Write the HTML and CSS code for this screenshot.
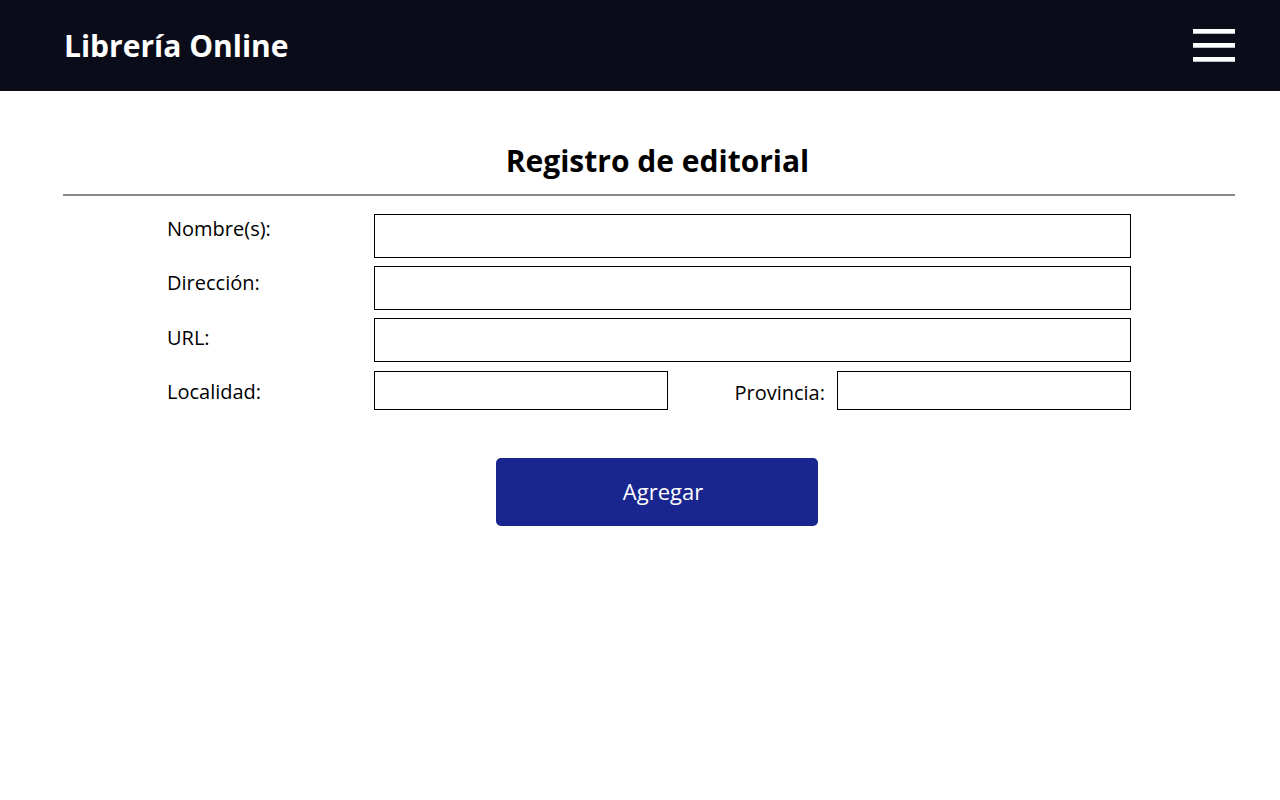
FILE: index.html
```html
<!DOCTYPE html>
<html lang="es">
<head>
<meta charset="utf-8">
<title>Librería Online</title>
<link rel="stylesheet" href="styles.css">
</head>
<body>
<header class="topbar">
  <div class="brand">Librería Online</div>
  <button class="menu" aria-label="Menú">
    <span class="bar"></span><span class="bar"></span><span class="bar"></span>
  </button>
</header>
<main class="content">
  <h1 class="title">Registro de editorial</h1>
  <hr class="rule">
  <form class="form">
    <div class="labels">
      <label class="lbl">Nombre(s):</label>
      <label class="lbl">Dirección:</label>
      <label class="lbl">URL:</label>
      <label class="lbl last">Localidad:</label>
    </div>
    <div class="fields">
      <input class="inp" type="text">
      <input class="inp" type="text">
      <input class="inp" type="text">
      <div class="split">
        <input class="inp small" type="text">
        <label class="lbl inline">Provincia:</label>
        <input class="inp small" type="text">
      </div>
    </div>
  </form>
  <div class="actions">
    <button class="btn" type="button">Agregar</button>
  </div>
</main>
</body>
</html>
```
FILE: styles.css
```css
* { box-sizing: border-box; }
html, body { margin: 0; padding: 0; background: #fff; }
body { font-family: "Open Sans", "Liberation Sans", sans-serif; color: #000; }

.topbar {
  height: 91px;
  background: #0a0c1a;
  display: flex;
  align-items: center;
  justify-content: space-between;
  padding: 0 45px 0 64px;
}
.brand {
  color: #fff;
  font-weight: 700;
  font-size: 30px;
  line-height: 1;
}
.menu {
  background: none;
  border: 0;
  padding: 0;
  width: 42px;
  display: flex;
  flex-direction: column;
  gap: 9px;
  margin-top: -1px;
}
.bar {
  display: block;
  height: 5px;
  background: #fff;
  border-bottom: 1px solid #b9bcc6;
}

.content { padding: 0 45px 0 63px; }
.title {
  margin: 0;
  padding: 50px 0 0 17px;
  text-align: center;
  font-size: 30px;
  font-weight: 700;
  line-height: 40px;
}
.rule {
  margin: 13px 0 0;
  border: 0;
  height: 2px;
  background: #888;
}

.form {
  display: flex;
  width: 964px;
  margin: 18px auto 0;
}
.labels {
  width: 207px;
  display: flex;
  flex-direction: column;
  padding-top: 1px;
}
.lbl {
  font-size: 20px;
  line-height: 27px;
  height: 54.4px;
}
.lbl.last { height: auto; }
.fields {
  flex: 1;
  display: flex;
  flex-direction: column;
  gap: 8px;
}
.inp {
  display: block;
  width: 100%;
  height: 44px;
  border: 1px solid #000;
  border-radius: 0;
  margin: 0;
  background: #fff;
  font: inherit;
}
.split {
  display: flex;
  align-items: center;
  margin-top: 1px;
}
.inp.small { width: 294px; height: 39px; }
.lbl.inline {
  height: auto;
  flex: 1;
  text-align: right;
  padding-right: 12px;
  padding-top: 4px;
}

.actions {
  display: flex;
  justify-content: center;
  padding: 48px 0 0 16px;
}
.btn {
  width: 322px;
  height: 68px;
  background: #1a268f;
  color: #fff;
  border: 0;
  border-radius: 5px;
  font-family: inherit;
  font-size: 22px;
  font-weight: 400;
  padding: 0 0 2px 12px;
}
```
